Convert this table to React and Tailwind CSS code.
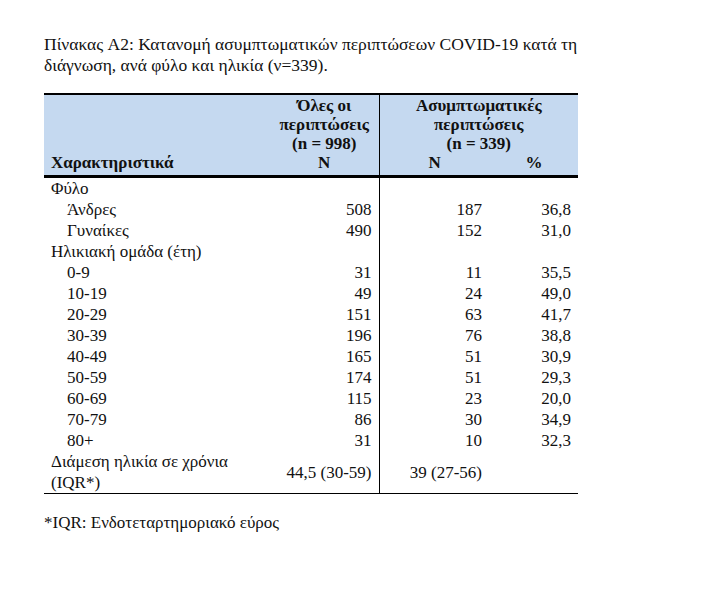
import React from 'react';

const rows = [
  { label: 'Φύλο', group: true },
  { label: 'Άνδρες', all: '508', n: '187', pct: '36,8' },
  { label: 'Γυναίκες', all: '490', n: '152', pct: '31,0' },
  { label: 'Ηλικιακή ομάδα (έτη)', group: true },
  { label: '0-9', all: '31', n: '11', pct: '35,5' },
  { label: '10-19', all: '49', n: '24', pct: '49,0' },
  { label: '20-29', all: '151', n: '63', pct: '41,7' },
  { label: '30-39', all: '196', n: '76', pct: '38,8' },
  { label: '40-49', all: '165', n: '51', pct: '30,9' },
  { label: '50-59', all: '174', n: '51', pct: '29,3' },
  { label: '60-69', all: '115', n: '23', pct: '20,0' },
  { label: '70-79', all: '86', n: '30', pct: '34,9' },
  { label: '80+', all: '31', n: '10', pct: '32,3' },
];

export default function App() {
  return (
    <div
      className="w-[708px] h-[593px] bg-white text-[#111] pt-[34px] pl-[44px]"
      style={{ fontFamily: '"Liberation Serif", serif' }}
    >
      <p className="text-[17.5px] leading-[21px] whitespace-nowrap">
        Πίνακας A2: Κατανομή ασυμπτωματικών περιπτώσεων COVID-19 κατά τη
        <br />
        διάγνωση, ανά φύλο και ηλικία (ν=339).
      </p>

      <table className="mt-[17px] w-[534px] border-collapse table-fixed text-[17px]">
        <colgroup>
          <col className="w-[226px]" />
          <col className="w-[109px]" />
          <col className="w-[111px]" />
          <col className="w-[88px]" />
        </colgroup>
        <thead className="bg-[#c5d9f0]">
          <tr className="border-t-2 border-black">
            <th rowSpan={2} className="align-bottom text-left pl-[7px] pb-[2px] leading-[20px] font-bold">
              Χαρακτηριστικά
            </th>
            <th className="border-r border-black text-center leading-[19px] pt-px font-bold">
              Όλες οι
              <br />
              περιπτώσεις
              <br />
              (n = 998)
            </th>
            <th colSpan={2} className="text-center leading-[19px] pt-px font-bold">
              Ασυμπτωματικές
              <br />
              περιπτώσεις
              <br />
              (n = 339)
            </th>
          </tr>
          <tr className="border-b-[3px] border-black">
            <th className="border-r border-black text-center leading-[20px] pb-[2px] font-bold">N</th>
            <th className="text-center leading-[20px] pb-[2px] font-bold">N</th>
            <th className="text-center leading-[20px] pb-[2px] font-bold">%</th>
          </tr>
        </thead>
        <tbody className="leading-[21px]">
          {rows.map((r) => (
            <tr key={r.label}>
              <td className={r.group ? 'pl-[7px]' : 'pl-[23px]'}>{r.label}</td>
              <td className="border-r border-black text-right pr-[7px]">{r.all}</td>
              <td className="text-right pr-[8px]">{r.n}</td>
              <td className="text-right pr-[7px]">{r.pct}</td>
            </tr>
          ))}
          <tr className="border-b border-black">
            <td className="pl-[7px] leading-[21px]">
              Διάμεση ηλικία σε χρόνια
              <br />
              (IQR*)
            </td>
            <td className="border-r border-black text-right pr-[7px]">44,5 (30-59)</td>
            <td className="text-right pr-[8px]">39 (27-56)</td>
            <td></td>
          </tr>
        </tbody>
      </table>

      <p className="mt-[18px] text-[17px] leading-[21px]">*IQR: Ενδοτεταρτημοριακό εύρος</p>
    </div>
  );
}
